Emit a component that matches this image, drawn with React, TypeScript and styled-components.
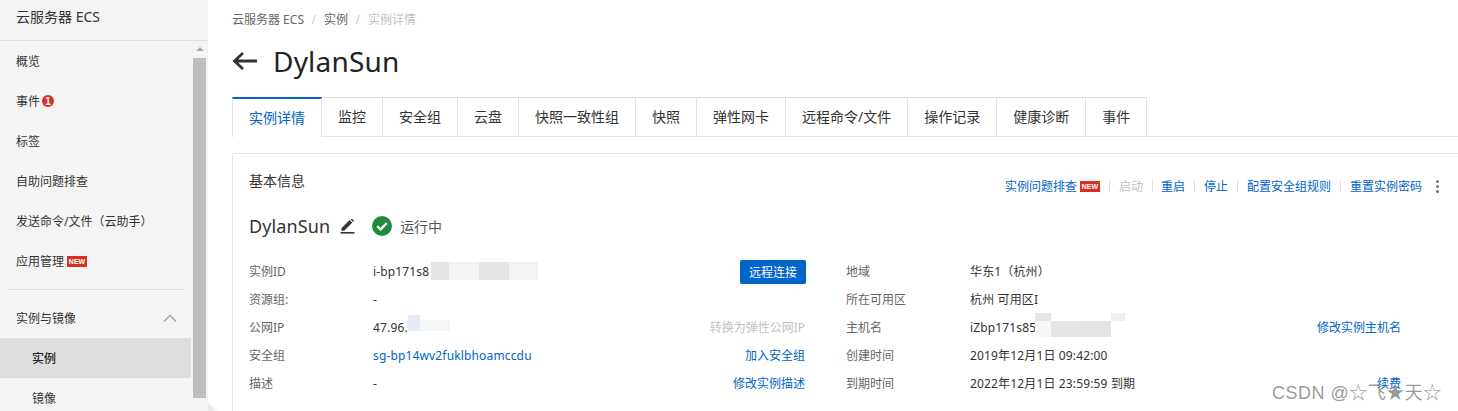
import styled, {createGlobalStyle} from "styled-components";

const GlobalStyle = createGlobalStyle`
  html, body {
    margin: 0;
    height: 411px;
    overflow: hidden;
    background: #fff;
  }
  body {
    font-family: "Noto Sans", "Noto Sans CJK SC", sans-serif;
    font-size: 12px;
    color: #333;
  }
`

const Page = styled.div`
  display: flex;
  width: 1458px;
  height: 411px;
  overflow: hidden;
  position: relative;
`

/* left menu */
const Sidebar = styled.aside`
  flex: 0 0 208px;
  height: 411px;
  background: #f4f4f4;
  display: flex;
  flex-direction: column;
  overflow: hidden;
`
const SidebarTitle = styled.div`
  flex: 0 0 41px;
  box-sizing: border-box;
  line-height: 34px;
  padding-left: 16px;
  font-size: 14px;
  border-bottom: 1px solid #e0e0e0;
`
const SidebarBody = styled.div`
  display: flex;
  flex: 1;
  min-height: 0;
`
const Nav = styled.nav`
  flex: 0 0 191px;
`
const NavItem = styled.div<{ $sub?: boolean; $active?: boolean }>`
  display: flex;
  align-items: center;
  height: 40px;
  padding-left: ${p => p.$sub ? "32px" : "16px"};
  background: ${p => p.$active ? "#dedede" : "transparent"};
  font-weight: ${p => p.$active ? 500 : 400};
  color: ${p => p.$active ? "#222" : "#333"};
`
const NavDivider = styled.div`
  height: 1px;
  margin: 8px 6px 9px 7px;
  background: #e0e0e0;
`
const NavGroup = styled(NavItem)`
  justify-content: space-between;
  padding-right: 14px;
  height: 40px;
  margin-top: -1px;
`
const CountBadge = styled.span`
  display: inline-flex;
  align-items: center;
  justify-content: center;
  width: 12px;
  height: 12px;
  margin-left: 2px;
  border-radius: 50%;
  background: #d93026;
  color: #fff;
  font-size: 10px;
  font-weight: 700;
  font-family: "Liberation Sans", sans-serif;
`
const NewBadge = styled.span`
  display: inline-block;
  width: 20px;
  height: 11px;
  line-height: 11px;
  margin-left: 3px;
  background: #d93026;
  color: #fff;
  font-size: 7px;
  font-weight: 700;
  text-align: center;
  font-family: "Liberation Sans", sans-serif;
`
const ScrollBar = styled.div`
  flex: 0 0 13px;
  margin-left: 2px;
  display: flex;
  flex-direction: column;
  align-items: center;
`
const ScrollArrow = styled.div`
  width: 0;
  height: 0;
  margin-top: 6px;
  border-left: 4px solid transparent;
  border-right: 4px solid transparent;
  border-bottom: 4px solid #a9a9a9;
`
const ScrollThumb = styled.div`
  width: 13px;
  height: 340px;
  margin-top: 7px;
  background: #bebebe;
`
const CornerTab = styled.div`
  position: absolute;
  left: 208px;
  top: 403px;
  width: 9px;
  height: 8px;
  background: #ececec;
  clip-path: polygon(0 0, 100% 100%, 0 100%);
`

/* main column */
const Main = styled.main`
  flex: 1;
  min-width: 0;
  padding: 11px 0 0 24px;
`
const Breadcrumb = styled.div`
  display: flex;
  align-items: center;
  height: 16px;
  color: #666;
`
const CrumbSep = styled.span`
  margin: 0 8px 0 7.5px;
  color: #ccc;
`
const CrumbCurrent = styled.span`
  color: #c1c1c1;
`
const TitleRow = styled.div`
  display: flex;
  align-items: center;
  gap: 15px;
  height: 40px;
  margin-top: 14px;
`
const Title = styled.h1`
  margin: 0;
  font-size: 28px;
  letter-spacing: .2px;
  font-weight: 400;
  color: #222;
`
const Tabs = styled.div`
  display: flex;
  margin-top: 16px;
  height: 40px;
  box-sizing: border-box;
  border-bottom: 1px solid #e3e3e3;
`
const Tab = styled.div<{ $active?: boolean }>`
  box-sizing: border-box;
  height: ${p => p.$active ? "40px" : "39px"};
  padding: 0 16px;
  line-height: ${p => p.$active ? "37px" : "38px"};
  font-size: 14px;
  white-space: nowrap;
  background: #fff;
  color: ${p => p.$active ? "#0064c8" : "#333"};
  border-top: ${p => p.$active ? "2px solid #0064c8" : "1px solid #e3e3e3"};
  border-right: 1px solid #e3e3e3;
  border-left: ${p => p.$active ? "1px solid #e3e3e3" : "none"};
  min-width: ${p => p.$active ? "89px" : "0"};
`
const Card = styled.section`
  box-sizing: border-box;
  width: 1240px;
  height: 270px;
  margin-top: 16px;
  padding: 17px 0 0 16px;
  border: 1px solid #e5e5e5;
`
const CardHead = styled.div`
  display: flex;
  justify-content: space-between;
  width: 1190px;
`
const CardTitle = styled.div`
  font-size: 14px;
  line-height: 20px;
`
const Actions = styled.div`
  display: flex;
  align-items: center;
  height: 16px;
  margin-top: 7px;
`
const ActionLink = styled.a<{ $disabled?: boolean }>`
  color: ${p => p.$disabled ? "#c1c1c1" : "#0064c8"};
  white-space: nowrap;
  display: inline-flex;
  align-items: center;
`
const ActionSep = styled.span<{ $narrow?: boolean }>`
  width: 1px;
  height: 12px;
  margin: 0 ${p => p.$narrow ? "8px" : "9px"} 0 9px;
  background: #e0e0e0;
`
const MoreDots = styled.span`
  display: inline-flex;
  flex-direction: column;
  gap: 2px;
  margin-left: 14px;
  i {
    width: 3px;
    height: 3px;
    border-radius: 50%;
    background: #777;
  }
`
const NameRow = styled.div`
  display: flex;
  align-items: center;
  height: 30px;
  margin-top: 17px;
`
const Name = styled.span`
  font-size: 18px;
  letter-spacing: .1px;
  color: #333;
`
const Status = styled.span`
  display: inline-flex;
  align-items: center;
  gap: 8px;
  margin-left: 17px;
  font-size: 14px;
  color: #555;
`
const InfoGrid = styled.div`
  display: grid;
  grid-template-columns: 556px 555px;
  column-gap: 41px;
  margin-top: 16px;
`
const InfoRow = styled.div`
  display: grid;
  grid-template-columns: 124px 1fr auto;
  align-items: center;
  height: 28px;
`
const Label = styled.span`
  color: #666;
`
const Value = styled.span<{ $link?: boolean }>`
  color: ${p => p.$link ? "#0064c8" : "#333"};
  letter-spacing: .15px;
  white-space: nowrap;
  display: flex;
  align-items: center;
`
const ConnectButton = styled.button`
  width: 66px;
  height: 24px;
  margin: 2px -1px 0 0;
  padding: 0;
  border: 0;
  border-radius: 2px;
  background: #0064c8;
  color: #fff;
  font: inherit;
`
/* blurred-out part of an address */
const Mosaic = styled.span`
  position: relative;
  display: inline-block;
  width: 0;
  height: 12px;
`
const Patch = styled.i<{ $l: number; $t: number; $w: number; $h: number; $c: string }>`
  position: absolute;
  left: ${p => p.$l}px;
  top: ${p => p.$t}px;
  width: ${p => p.$w}px;
  height: ${p => p.$h}px;
  background: ${p => p.$c};
`
const Watermark = styled.div`
  position: absolute;
  left: 1272px;
  top: 381px;
  font-size: 18px;
  line-height: 24px;
  letter-spacing: .5px;
  color: rgba(120, 120, 120, .75);
  font-family: "Liberation Sans", "Noto Sans CJK SC", sans-serif;
  white-space: nowrap;
`

const tabs = ["监控", "安全组", "云盘", "快照一致性组", "快照", "弹性网卡", "远程命令/文件", "操作记录", "健康诊断", "事件"]

const BackArrow = () => (
    <svg width="26" height="20" viewBox="0 0 26 20" fill="none" stroke="#333" strokeWidth="2.8">
        <path d="M25 10H2.5M11 2 2.5 10l8.5 8"/>
    </svg>
)

const Pencil = () => (
    <svg width="15" height="15" viewBox="0 0 15 15" style={{marginLeft: 10}}>
        <path d="M1.5 10.2 9.6 2.1l2.6 2.6-8.1 8.1H1.5z M10.5 1.2l1-.9 2.6 2.6-1 1z" fill="#333" transform="translate(0 -1)"/>
        <rect x="0.5" y="13" width="14" height="1.6" fill="#333"/>
    </svg>
)

const RunningIcon = () => (
    <svg width="20" height="20" viewBox="0 0 20 20">
        <circle cx="10" cy="10" r="10" fill="#1e8a3e"/>
        <path d="M5.2 10.2 8.6 13.4 14.8 7" fill="none" stroke="#fff" strokeWidth="2.4"/>
    </svg>
)

const Chevron = () => (
    <svg width="14" height="8" viewBox="0 0 14 8" fill="none" stroke="#aaa" strokeWidth="1.4">
        <path d="M1 7.5 7 1.2l6 6.3"/>
    </svg>
)

export default function App() {
    return (
        <Page>
            <GlobalStyle/>
            <Sidebar>
                <SidebarTitle>云服务器 ECS</SidebarTitle>
                <SidebarBody>
                    <Nav>
                        <NavItem>概览</NavItem>
                        <NavItem>事件<CountBadge>1</CountBadge></NavItem>
                        <NavItem>标签</NavItem>
                        <NavItem>自助问题排查</NavItem>
                        <NavItem>发送命令/文件（云助手）</NavItem>
                        <NavItem>应用管理<NewBadge>NEW</NewBadge></NavItem>
                        <NavDivider/>
                        <NavGroup>实例与镜像<Chevron/></NavGroup>
                        <NavItem $sub $active>实例</NavItem>
                        <NavItem $sub>镜像</NavItem>
                    </Nav>
                    <ScrollBar>
                        <ScrollArrow/>
                        <ScrollThumb/>
                    </ScrollBar>
                </SidebarBody>
            </Sidebar>
            <CornerTab/>
            <Main>
                <Breadcrumb>
                    云服务器 ECS<CrumbSep>/</CrumbSep>实例<CrumbSep>/</CrumbSep><CrumbCurrent>实例详情</CrumbCurrent>
                </Breadcrumb>
                <TitleRow>
                    <BackArrow/>
                    <Title>DylanSun</Title>
                </TitleRow>
                <Tabs>
                    <Tab $active>实例详情</Tab>
                    {tabs.map(t => <Tab key={t}>{t}</Tab>)}
                </Tabs>
                <Card>
                    <CardHead>
                        <CardTitle>基本信息</CardTitle>
                        <Actions>
                            <ActionLink>实例问题排查<NewBadge>NEW</NewBadge></ActionLink>
                            <ActionSep/>
                            <ActionLink $disabled>启动</ActionLink>
                            <ActionSep $narrow/>
                            <ActionLink>重启</ActionLink>
                            <ActionSep/>
                            <ActionLink>停止</ActionLink>
                            <ActionSep/>
                            <ActionLink>配置安全组规则</ActionLink>
                            <ActionSep/>
                            <ActionLink>重置实例密码</ActionLink>
                            <MoreDots><i/><i/><i/></MoreDots>
                        </Actions>
                    </CardHead>
                    <NameRow>
                        <Name>DylanSun</Name>
                        <Pencil/>
                        <Status><RunningIcon/>运行中</Status>
                    </NameRow>
                    <InfoGrid>
                        <InfoRow>
                            <Label>实例ID</Label>
                            <Value>i-bp171s8
                                <Mosaic>
                                    <Patch $l={2} $t={-3} $w={18} $h={18} $c="#e5e4e2"/>
                                    <Patch $l={20} $t={-3} $w={30} $h={18} $c="#f3f3f3"/>
                                    <Patch $l={50} $t={-3} $w={30} $h={18} $c="#e4e5e7"/>
                                    <Patch $l={80} $t={-3} $w={29} $h={18} $c="#f2f3f5"/>
                                </Mosaic>
                            </Value>
                            <ConnectButton>远程连接</ConnectButton>
                        </InfoRow>
                        <InfoRow>
                            <Label>地域</Label>
                            <Value>华东1（杭州）</Value>
                            <span/>
                        </InfoRow>
                        <InfoRow>
                            <Label>资源组:</Label>
                            <Value>-</Value>
                            <span/>
                        </InfoRow>
                        <InfoRow>
                            <Label>所在可用区</Label>
                            <Value>杭州 可用区I</Value>
                            <span/>
                        </InfoRow>
                        <InfoRow>
                            <Label>公网IP</Label>
                            <Value>47.96.
                                <Mosaic>
                                    <Patch $l={0} $t={-6} $w={12} $h={16} $c="#e4eaf6"/>
                                    <Patch $l={12} $t={-1} $w={30} $h={11} $c="#f4f5f5"/>
                                </Mosaic>
                            </Value>
                            <ActionLink $disabled>转换为弹性公网IP</ActionLink>
                        </InfoRow>
                        <InfoRow>
                            <Label>主机名</Label>
                            <Value>iZbp171s85
                                <Mosaic>
                                    <Patch $l={-1} $t={-8} $w={16} $h={8} $c="#e6e6e6"/>
                                    <Patch $l={-1} $t={0} $w={16} $h={16} $c="#f7f7f7"/>
                                    <Patch $l={15} $t={0} $w={30} $h={16} $c="#e5e6e8"/>
                                    <Patch $l={45} $t={0} $w={30} $h={16} $c="#e5e5e5"/>
                                    <Patch $l={75} $t={-8} $w={14} $h={8} $c="#f0f0f0"/>
                                </Mosaic>
                            </Value>
                            <ActionLink>修改实例主机名</ActionLink>
                        </InfoRow>
                        <InfoRow>
                            <Label>安全组</Label>
                            <Value $link>sg-bp14wv2fuklbhoamccdu</Value>
                            <ActionLink>加入安全组</ActionLink>
                        </InfoRow>
                        <InfoRow>
                            <Label>创建时间</Label>
                            <Value>2019年12月1日 09:42:00</Value>
                            <span/>
                        </InfoRow>
                        <InfoRow>
                            <Label>描述</Label>
                            <Value>-</Value>
                            <ActionLink>修改实例描述</ActionLink>
                        </InfoRow>
                        <InfoRow>
                            <Label>到期时间</Label>
                            <Value>2022年12月1日 23:59:59 到期</Value>
                            <ActionLink>续费</ActionLink>
                        </InfoRow>
                    </InfoGrid>
                </Card>
            </Main>
            <Watermark>CSDN @☆飞★天☆</Watermark>
        </Page>
    )
}
